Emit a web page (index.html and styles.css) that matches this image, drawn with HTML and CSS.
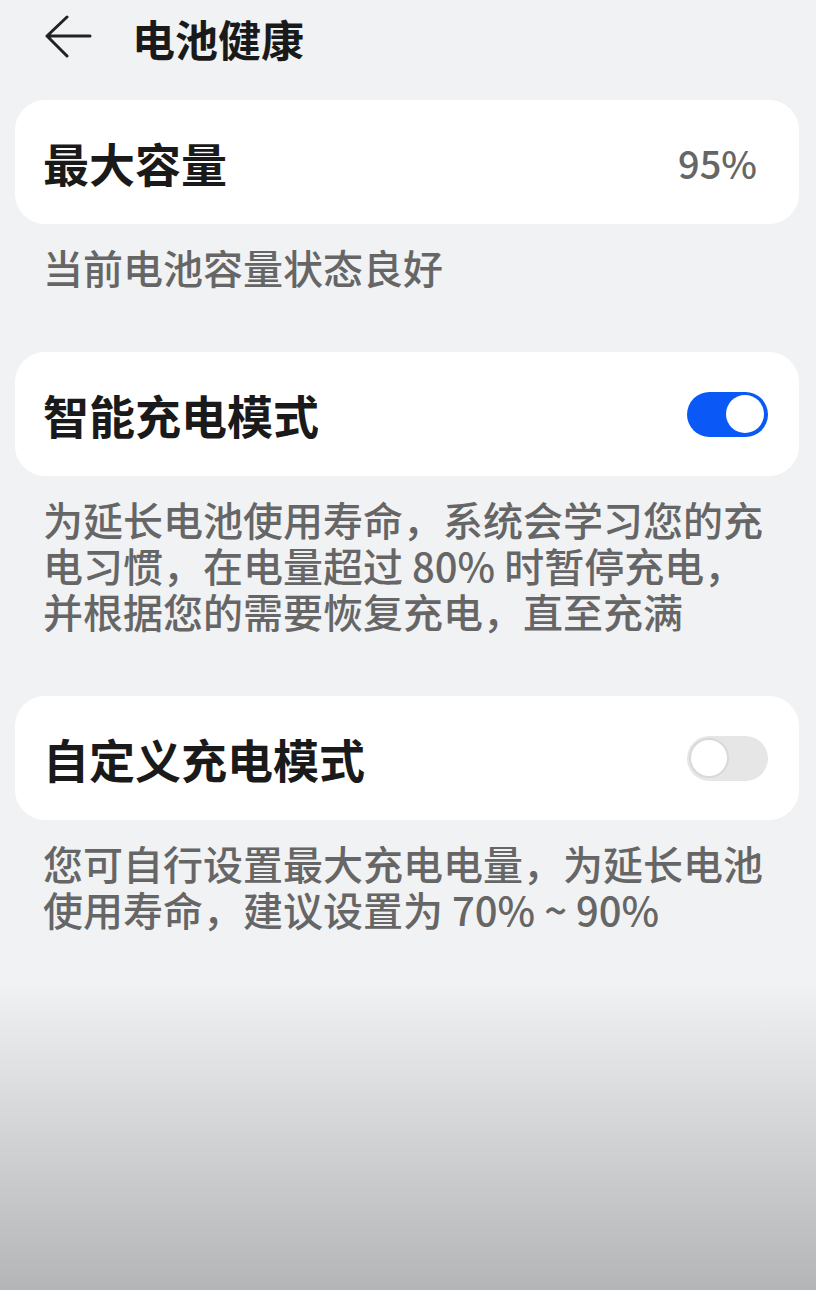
FILE: index.html
```html
<!DOCTYPE html>
<html lang="zh-CN">
<head>
    <meta charset="UTF-8">
    <meta name="viewport" content="width=device-width, initial-scale=1.0">
    <title>电池健康</title>
    <link rel="stylesheet" href="styles.css">
</head>
<body>
    <div class="header">
        <svg class="back" width="48" height="44" viewBox="0 0 48 44">
            <path d="M23 3 L3 22 L23 42 M3 22 L46 22" fill="none" stroke="#222" stroke-width="3" stroke-linecap="round" stroke-linejoin="round"/>
        </svg>
        <h1 class="title">电池健康</h1>
    </div>

    <div class="content">
        <div class="card">
            <span class="card-title">最大容量</span>
            <span class="card-value">95%</span>
        </div>
        <p class="desc">当前电池容量状态良好</p>

        <div class="card">
            <span class="card-title">智能充电模式</span>
            <div class="switch on"><div class="knob"></div></div>
        </div>
        <p class="desc">为延长电池使用寿命，系统会学习您的充<br>电习惯，在电量超过 80% 时暂停充电，<br>并根据您的需要恢复充电，直至充满</p>

        <div class="card">
            <span class="card-title">自定义充电模式</span>
            <div class="switch"><div class="knob"></div></div>
        </div>
        <p class="desc">您可自行设置最大充电电量，为延长电池<br>使用寿命，建议设置为 70% ~ 90%</p>
    </div>
</body>
</html>
```

FILE: styles.css
```css
html, body {
    margin: 0;
    padding: 0;
}
body {
    font-family: "Noto Sans CJK SC", "Noto Sans", sans-serif;
    min-height: 1290px;
    background: linear-gradient(to bottom, #f1f2f4 0, #f1f2f4 980px, #b4b5b7 1290px);
    color: #1a1a1a;
}
.header {
    height: 76px;
    display: flex;
    align-items: center;
    padding-left: 44px;
}
.back {
    display: block;
    margin-top: -4px;
}
.title {
    margin: 0 0 0 40px;
    font-size: 43px;
    font-weight: 700;
    line-height: 1;
}
.content {
    padding: 24px 17px 0 15px;
}
.card {
    background: #fff;
    border-radius: 30px;
    height: 124px;
    display: flex;
    align-items: center;
    justify-content: space-between;
    padding: 0 31px 0 28px;
}
.card-title {
    font-size: 46px;
    font-weight: 700;
    line-height: 1;
}
.card-value {
    font-size: 38px;
    font-weight: 500;
    color: #666;
    margin-right: 11px;
}
.desc {
    margin: 0;
    padding: 20px 28px 62px;
    font-size: 40px;
    font-weight: 500;
    line-height: 46px;
    color: #666;
}
.switch {
    width: 81px;
    height: 45px;
    box-sizing: border-box;
    border-radius: 23px;
    background: #e6e6e6;
    display: flex;
    align-items: center;
    padding: 0 2px;
}
.switch .knob {
    width: 40px;
    height: 40px;
    box-sizing: border-box;
    border-radius: 50%;
    background: #fff;
    border: 2px solid #d9d9d9;
}
.switch.on {
    background: #0a59f7;
    justify-content: flex-end;
    padding: 0 4px;
}
.switch.on .knob {
    width: 38px;
    height: 38px;
    border: none;
}
```
